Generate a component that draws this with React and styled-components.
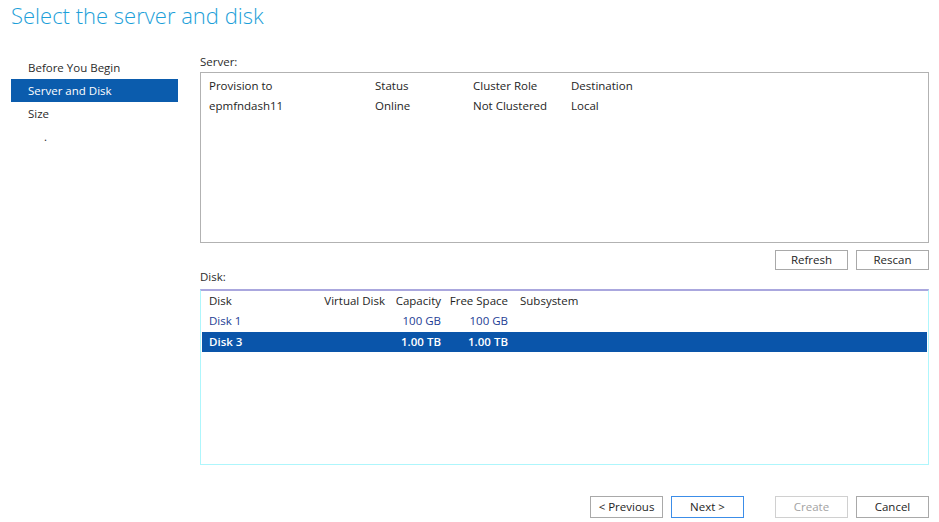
import React from 'react';
import styled, { createGlobalStyle } from 'styled-components';

const GlobalStyle = createGlobalStyle`
  html, body {
    margin: 0;
    padding: 0;
    background: #ffffff;
  }
  body {
    font-family: "Open Sans", "Noto Sans", "Liberation Sans", sans-serif;
    font-size: 11.5px;
    color: #1e1e1e;
  }
`;

const Page = styled.div`
  width: 939px;
  height: 522px;
  display: flex;
  flex-direction: column;
  box-sizing: border-box;
  padding: 0 10px 0 11px;
`;

const Title = styled.h1`
  margin: 0;
  padding-top: 1px;
  height: 57px;
  box-sizing: border-box;
  font-size: 22px;
  font-weight: 300;
  line-height: 28px;
  color: #1d9fd9;
`;

const Body = styled.div`
  display: flex;
  gap: 22px;
  flex: 1;
`;

const Nav = styled.ul`
  list-style: none;
  margin: -1px 0 0;
  padding: 0;
  width: 167px;
  flex-shrink: 0;
`;

const NavItem = styled.li`
  height: 23px;
  line-height: 23px;
  padding-left: ${p => (p.$sub ? 33 : 17)}px;
  color: ${p => (p.$active ? '#ffffff' : '#2b2b2b')};
  background: ${p => (p.$active ? '#0b5cad' : 'transparent')};
`;

const Content = styled.div`
  flex: 1;
  display: flex;
  flex-direction: column;
`;

const Label = styled.div`
  height: ${p => p.$h || 15}px;
  line-height: ${p => p.$lh || 10}px;
  color: #2b2b2b;
`;

const ServerList = styled.div`
  height: 171px;
  box-sizing: border-box;
  border: 1px solid #b2b2b2;
  padding-top: 3px;
`;

const DiskList = styled.div`
  height: 176px;
  box-sizing: border-box;
  border: 1px solid #aef6fc;
  border-top: 2px solid #aaa7de;
  padding: 0 1px;
`;

const ServerRow = styled.div`
  display: grid;
  grid-template-columns: 166px 98px 98px 1fr;
  height: 20px;
  line-height: 20px;
  padding-left: 8px;
  color: #1e1e1e;
`;

const DiskRow = styled.div`
  display: grid;
  grid-template-columns: 109px 67px 56px 67px 1fr;
  height: 20px;
  line-height: 20px;
  padding-left: 7px;
  margin-top: ${p => (p.$selected ? 1 : 0)}px;
  background: ${p => (p.$selected ? '#0a55aa' : 'transparent')};
  color: ${p => (p.$selected ? '#ffffff' : p.$item ? '#233c94' : '#1e1e1e')};
  font-weight: ${p => (p.$selected ? 600 : 400)};
`;

const Cell = styled.span`
  text-align: ${p => (p.$right ? 'right' : 'left')};
  padding-left: ${p => (p.$pad ? 12 : 0)}px;
  white-space: nowrap;
`;

const ButtonBar = styled.div`
  display: flex;
  justify-content: flex-end;
  gap: 8px;
  margin-top: 7px;
`;

const Footer = styled.div`
  display: flex;
  justify-content: flex-end;
  margin-top: 31px;
`;

const Group = styled.div`
  display: flex;
  gap: 8px;
  margin-left: ${p => p.$offset || 0}px;
`;

const Button = styled.button`
  width: 73px;
  height: ${p => p.$h || 20}px;
  box-sizing: border-box;
  background: #ffffff;
  border: 1px solid ${p => (p.$primary ? '#3c8de8' : p.disabled ? '#d0d0d0' : '#a9a9a9')};
  color: ${p => (p.disabled ? '#a3a3a3' : '#1e1e1e')};
  font-family: inherit;
  font-size: 11.5px;
  padding: 0;
  line-height: 1;
`;

const steps = [
  { name: 'Before You Begin' },
  { name: 'Server and Disk', active: true },
  { name: 'Size' },
  { name: '.', sub: true },
];

const disks = [
  { name: 'Disk 1', virtual: '', capacity: '100 GB', free: '100 GB', subsystem: '' },
  { name: 'Disk 3', virtual: '', capacity: '1.00 TB', free: '1.00 TB', subsystem: '', selected: true },
];

export default function App() {
  return (
    <>
      <GlobalStyle />
      <Page>
        <Title>Select the server and disk</Title>
        <Body>
          <Nav>
            {steps.map(s => (
              <NavItem key={s.name} $active={s.active} $sub={s.sub}>{s.name}</NavItem>
            ))}
          </Nav>
          <Content>
            <Label>Server:</Label>
            <ServerList>
              <ServerRow>
                <span>Provision to</span>
                <span>Status</span>
                <span>Cluster Role</span>
                <span>Destination</span>
              </ServerRow>
              <ServerRow>
                <span>epmfndash11</span>
                <span>Online</span>
                <span>Not Clustered</span>
                <span>Local</span>
              </ServerRow>
            </ServerList>
            <ButtonBar>
              <Button>Refresh</Button>
              <Button>Rescan</Button>
            </ButtonBar>
            <Label $h={19} $lh={14}>Disk:</Label>
            <DiskList>
              <DiskRow>
                <Cell>Disk</Cell>
                <Cell $right>Virtual Disk</Cell>
                <Cell $right>Capacity</Cell>
                <Cell $right>Free Space</Cell>
                <Cell $pad>Subsystem</Cell>
              </DiskRow>
              {disks.map(d => (
                <DiskRow key={d.name} $item $selected={d.selected}>
                  <Cell>{d.name}</Cell>
                  <Cell $right>{d.virtual}</Cell>
                  <Cell $right>{d.capacity}</Cell>
                  <Cell $right>{d.free}</Cell>
                  <Cell $pad>{d.subsystem}</Cell>
                </DiskRow>
              ))}
            </DiskList>
            <Footer>
              <Group>
                <Button $h={22}>&lt; Previous</Button>
                <Button $h={22} $primary>Next &gt;</Button>
              </Group>
              <Group $offset={31}>
                <Button $h={22} disabled>Create</Button>
                <Button $h={22}>Cancel</Button>
              </Group>
            </Footer>
          </Content>
        </Body>
      </Page>
    </>
  );
}
